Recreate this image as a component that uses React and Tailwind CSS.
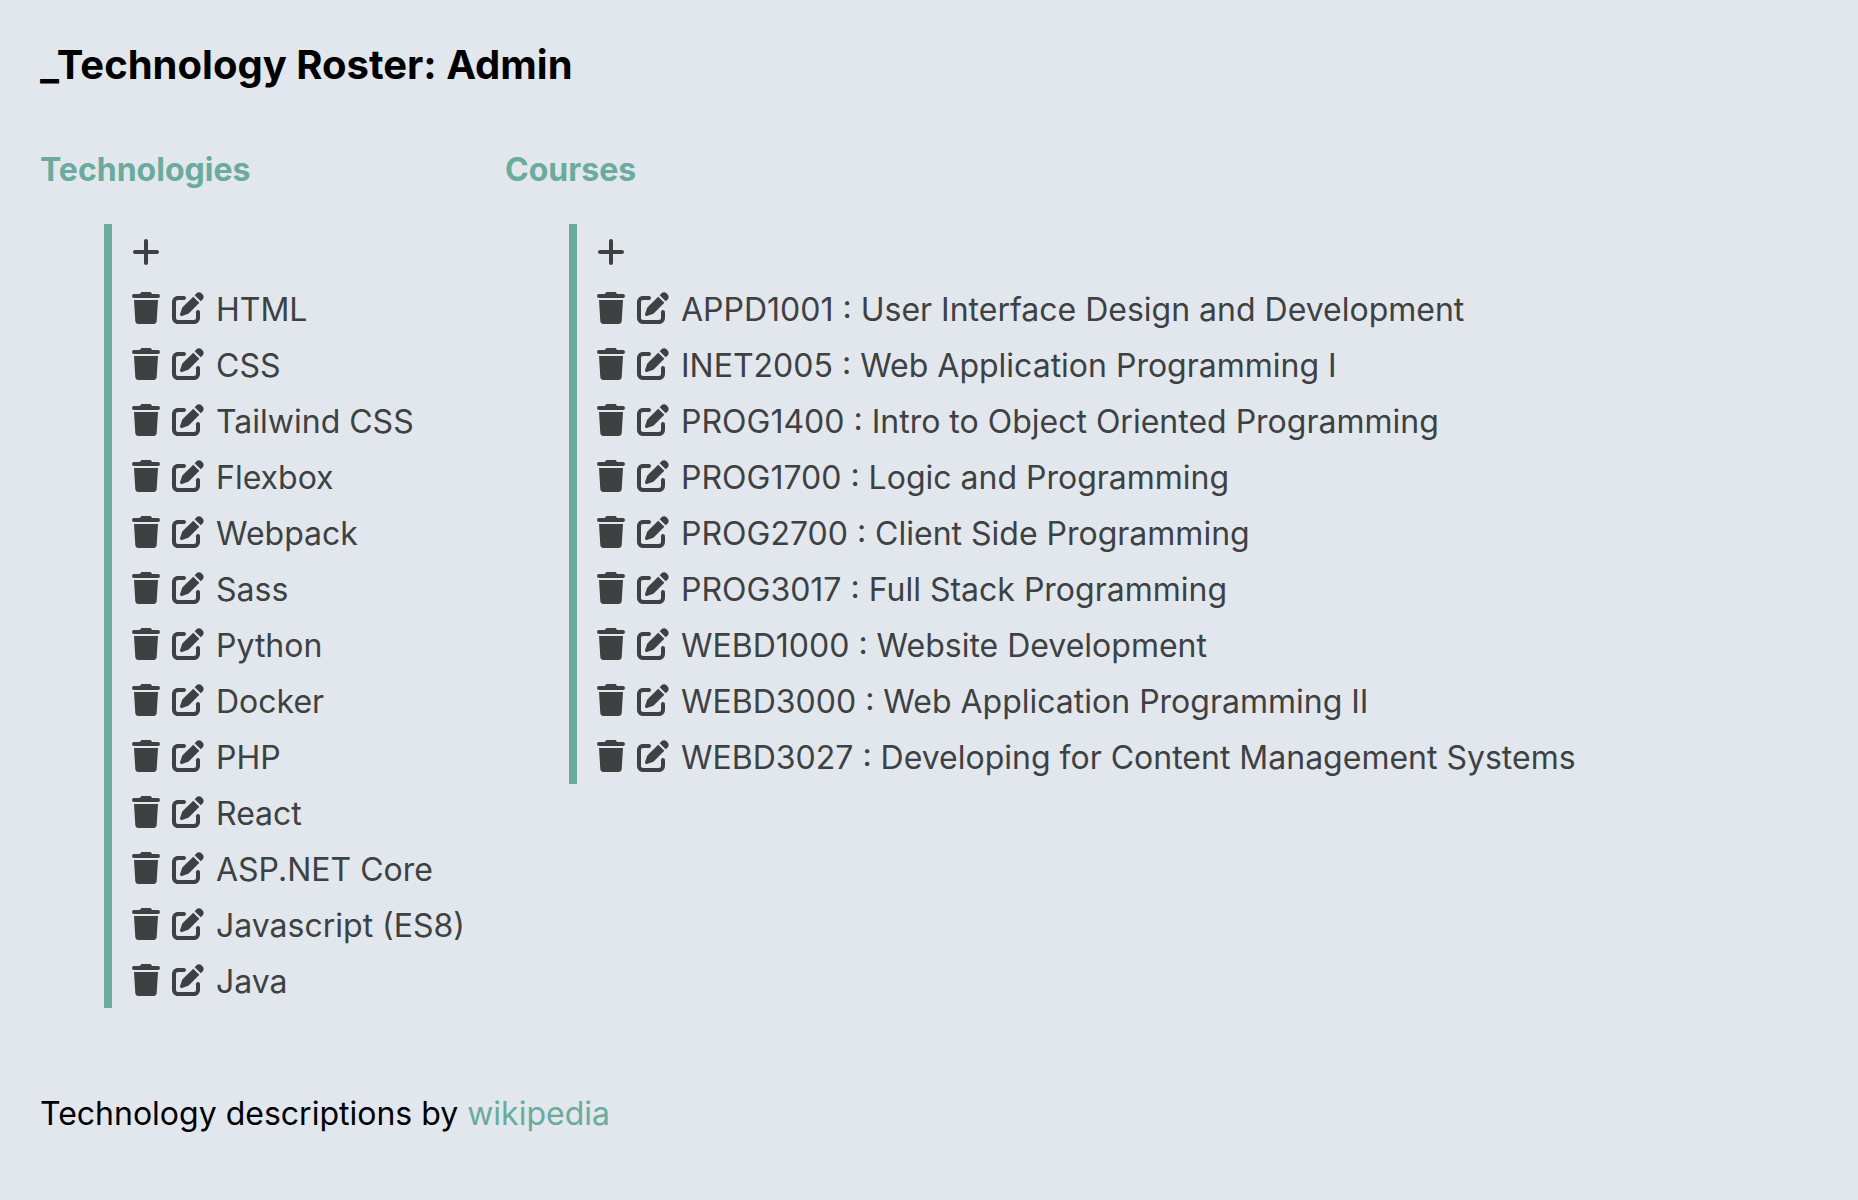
import { FaTrash, FaPlus, FaPenToSquare } from "react-icons/fa6";

const technologies = ["HTML", "CSS", "Tailwind CSS", "Flexbox", "Webpack", "Sass", "Python", "Docker", "PHP", "React", "ASP.NET Core", "Javascript (ES8)", "Java"];
const courses = [
  "APPD1001 : User Interface Design and Development",
  "INET2005 : Web Application Programming I",
  "PROG1400 : Intro to Object Oriented Programming",
  "PROG1700 : Logic and Programming",
  "PROG2700 : Client Side Programming",
  "PROG3017 : Full Stack Programming",
  "WEBD1000 : Website Development",
  "WEBD3000 : Web Application Programming II",
  "WEBD3027 : Developing for Content Management Systems",
];

function Roster({ title, items }) {
  return (
    <section>
      <h2 className="text-[32px] leading-12 font-bold text-[#6aab9c]">{title}</h2>
      <ul className="mt-[30px] ml-16 border-l-8 border-[#6aab9c] pl-5 text-[#3e4142]">
        <li className="flex h-14 items-center">
          <button type="button" aria-label={"Add to " + title}>
            <FaPlus className="h-8 w-7" />
          </button>
        </li>
        {items.map((item) => (
          <li key={item} className="flex h-14 items-center whitespace-nowrap">
            <button type="button" aria-label={"Delete " + item}>
              <FaTrash className="h-8 w-7" />
            </button>
            <button type="button" aria-label={"Edit " + item} className="ml-3">
              <FaPenToSquare className="size-8" />
            </button>
            <span className="ml-3 pt-[3px]">{item}</span>
          </li>
        ))}
      </ul>
    </section>
  );
}

export default function App() {
  return (
    <main className="min-h-screen bg-[#e2e7ee] px-10 py-10 font-['Inter','Liberation_Sans',sans-serif] text-[32px] leading-12 text-black">
      <h1 className="text-[40px] leading-[50px] font-bold">_Technology Roster: Admin</h1>
      <div className="mt-14 flex gap-10">
        <Roster title="Technologies" items={technologies} />
        <Roster title="Courses" items={courses} />
      </div>
      <p className="mt-[82px]">
        Technology descriptions by <a href="https://www.wikipedia.org" className="text-[#6aab9c]">wikipedia</a>
      </p>
    </main>
  );
}
